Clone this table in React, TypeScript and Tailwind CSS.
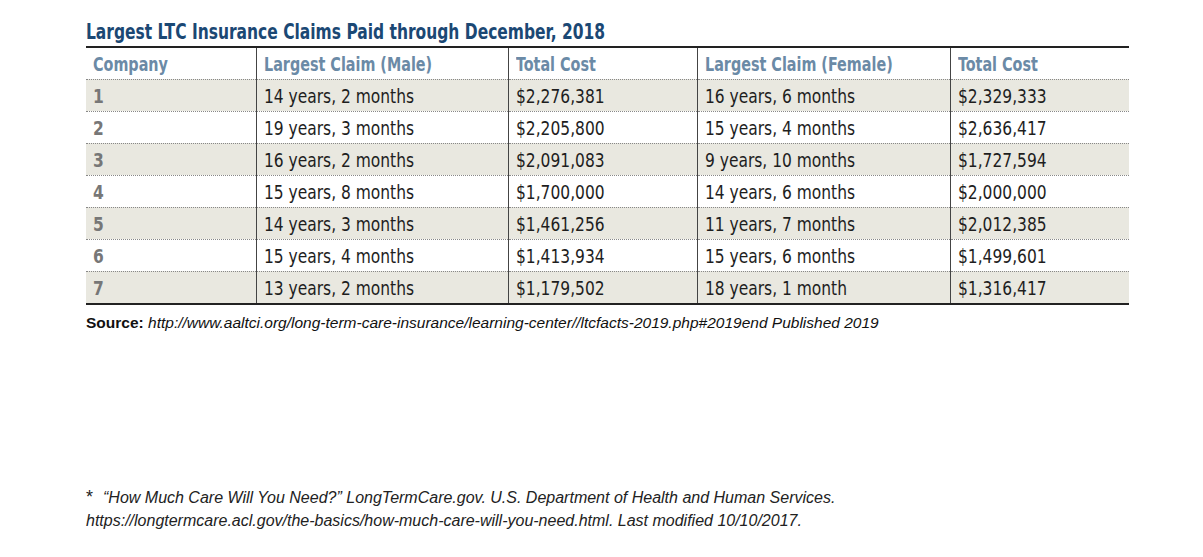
const rows = [
  ['1', '14 years, 2 months', '$2,276,381', '16 years, 6 months', '$2,329,333'],
  ['2', '19 years, 3 months', '$2,205,800', '15 years, 4 months', '$2,636,417'],
  ['3', '16 years, 2 months', '$2,091,083', '9 years, 10 months', '$1,727,594'],
  ['4', '15 years, 8 months', '$1,700,000', '14 years, 6 months', '$2,000,000'],
  ['5', '14 years, 3 months', '$1,461,256', '11 years, 7 months', '$2,012,385'],
  ['6', '15 years, 4 months', '$1,413,934', '15 years, 6 months', '$1,499,601'],
  ['7', '13 years, 2 months', '$1,179,502', '18 years, 1 month', '$1,316,417'],
];

const headers = ['Company', 'Largest Claim (Male)', 'Total Cost', 'Largest Claim (Female)', 'Total Cost'];
const widths = ['w-[170px]', 'w-[252px]', 'w-[189px]', 'w-[253px]', 'w-[179px]'];

// no narrow face installed, so the condensed one is squeezed a bit more
const narrow = { fontFamily: '"DejaVu Sans Condensed", "DejaVu Sans", sans-serif' };

export default function App() {
  return (
    <div className="w-[1203px] h-[557px] bg-white" style={{ fontFamily: '"Liberation Sans", Arial, sans-serif' }}>
      <div className="pl-[86px] pt-[20px]">
        <h1 className="text-[21px] leading-[25px] font-bold text-[#1b4874] whitespace-nowrap" style={narrow}>
          <span className="inline-block origin-left scale-x-[0.82]">
            Largest LTC Insurance Claims Paid through December, 2018
          </span>
        </h1>
        <table className="mt-[1px] border-collapse border-t-2 border-b-2 border-[#222]" style={narrow}>
          <thead>
            <tr className="h-[29px] border-b border-dotted border-[#888]">
              {headers.map((h, i) => (
                <th
                  key={i}
                  className={`${widths[i]} text-left align-middle px-[7px] pt-[2px] text-[19px] font-bold text-[#6b8aa6] whitespace-nowrap ${i > 0 ? 'border-l-[1.5px] border-[#444]' : ''}`}
                >
                  <span className="inline-block origin-left scale-x-[0.84]">{h}</span>
                </th>
              ))}
            </tr>
          </thead>
          <tbody>
            {rows.map((r, ri) => (
              <tr
                key={ri}
                className={`h-[31px] ${ri % 2 === 0 ? 'bg-[#e9e8e0]' : 'bg-white'} ${ri < rows.length - 1 ? 'border-b border-dotted border-[#888]' : ''}`}
              >
                {r.map((c, ci) => (
                  <td
                    key={ci}
                    className={`align-middle px-[7px] pt-[1px] text-[20px] whitespace-nowrap ${ci === 0 ? 'font-bold text-[#777]' : 'text-[#1e1e1e]'} ${ci > 0 ? 'border-l-[1.5px] border-[#444]' : ''}`}
                  >
                    <span className="inline-block origin-left scale-x-[0.86]">{c}</span>
                  </td>
                ))}
              </tr>
            ))}
          </tbody>
        </table>
        <p className="mt-[8px] text-[15.5px] leading-[20px] text-[#111]">
          <span className="font-bold">Source:</span>{' '}
          <span className="italic">http://www.aaltci.org/long-term-care-insurance/learning-center//ltcfacts-2019.php#2019end Published 2019</span>
        </p>
        <div className="mt-[153px] text-[16px] leading-[23px] italic text-[#222]">
          <p>
            <span className="not-italic text-[18px] mr-[10px]">*</span>“How Much Care Will You Need?” LongTermCare.gov. U.S. Department of Health and Human Services.
          </p>
          <p>https://longtermcare.acl.gov/the-basics/how-much-care-will-you-need.html. Last modified 10/10/2017.</p>
        </div>
      </div>
    </div>
  );
}
